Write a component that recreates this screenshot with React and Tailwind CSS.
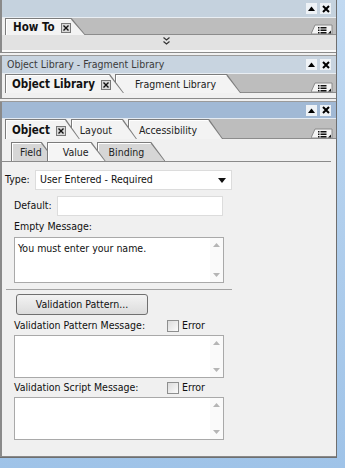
import React from "react";

const font = { fontFamily: '"DejaVu Sans Condensed", "Liberation Sans", Arial, sans-serif' };

const CLIP = "[clip-path:polygon(0_0,calc(100%-14px)_0,100%_100%,0_100%)]";

function TitleButtons() {
  return (
    <div className="ml-auto flex items-center gap-[3px] pr-[5px]">
      <div className="w-[11px] h-[11px] bg-[#eef2f6] flex items-center justify-center">
        <svg width="7" height="5" viewBox="0 0 7 5">
          <path d="M0 5 L3.5 0.5 L7 5 Z" fill="#000" />
        </svg>
      </div>
      <div className="w-[11px] h-[11px] bg-[#eef2f6] flex items-center justify-center">
        <svg width="8" height="8" viewBox="0 0 8 8">
          <path d="M1 1 L7 7 M7 1 L1 7" stroke="#000" strokeWidth="2" />
        </svg>
      </div>
    </div>
  );
}

function CloseBox() {
  return (
    <span className="inline-flex w-[10px] h-[10px] border border-[#777] bg-[#d8d8d8] items-center justify-center ml-[6px]">
      <svg width="6" height="6" viewBox="0 0 6 6">
        <path d="M0.5 0.5 L5.5 5.5 M5.5 0.5 L0.5 5.5" stroke="#111" strokeWidth="1.4" />
      </svg>
    </span>
  );
}

function Tab({ label, bold, close, first, z, bg = "bg-[#f3f3f3]", pl = "pl-[5px]", pr = "pr-[16px]" }) {
  return (
    <div className={`relative h-full ${first ? "" : "-ml-[9px]"} ${z} bg-[#7c7c7c] pt-px pl-px pr-px ${CLIP}`}>
      <div className={`h-full ${bg} flex items-center pt-[1px] ${pl} ${pr} ${CLIP} border-l border-t border-white`}>
        <span className={bold ? "font-bold text-[11.5px] text-[#111]" : "text-[10.5px] text-[#222]"}>{label}</span>
        {close && <CloseBox />}
      </div>
    </div>
  );
}

function MenuIcon() {
  return (
    <svg width="22" height="10" viewBox="0 0 22 10" className="self-end">
      <path d="M0 10 L4 1 L21 1 L21 10 Z" fill="#f4f4f4" stroke="#8a8a8a" strokeWidth="1" />
      <rect x="7" y="3" width="1.5" height="1.5" fill="#111" />
      <rect x="7" y="5.5" width="1.5" height="1.5" fill="#111" />
      <rect x="7" y="8" width="1.5" height="1.5" fill="#111" />
      <rect x="9.5" y="3" width="6" height="1.5" fill="#111" />
      <rect x="9.5" y="5.5" width="6" height="1.5" fill="#111" />
      <rect x="9.5" y="8" width="6" height="1.5" fill="#111" />
      <path d="M20 6.5 L20 9.5 L17 9.5 Z" fill="#111" />
    </svg>
  );
}

function TabRow({ children, h = "h-[17px]" }) {
  return (
    <div className={`flex ${h} pl-[3px] bg-[#f0f0f0]`}>
      {children}
      <div className="-ml-[14px] flex-1 flex justify-end bg-[#bdbdbd] border-b border-[#8c8c8c] pr-[3px]">
        <MenuIcon />
      </div>
    </div>
  );
}

function Scroll() {
  return (
    <div className="w-[13px] flex flex-col justify-between items-center py-[5px] bg-[#fafafa]">
      <svg width="7" height="4" viewBox="0 0 7 4"><path d="M0 4 L3.5 0 L7 4 Z" fill="#b5b5b5" /></svg>
      <svg width="7" height="4" viewBox="0 0 7 4"><path d="M0 0 L3.5 4 L7 0 Z" fill="#b5b5b5" /></svg>
    </div>
  );
}

function TextArea({ text, h }) {
  return (
    <div className={`ml-[12px] w-[210px] ${h} flex bg-white border border-[#a9a9a9]`}>
      <div className="flex-1 pl-[3px] pt-[3px] text-[10.5px] text-[#111]">{text}</div>
      <Scroll />
    </div>
  );
}

function Check() {
  return (
    <span className="inline-block w-[12px] h-[12px] border border-[#8e8f8f] bg-gradient-to-br from-[#dcdcdc] to-[#fbfbfb] mr-[3px]" />
  );
}

export default function App() {
  return (
    <div className="w-[345px] h-[468px] bg-gradient-to-b from-[#c1d9f1] to-[#9fc3e8] overflow-hidden" style={font}>
      <div className="w-[337px] h-[458px] bg-[#f0f0f0] border-r border-b border-[#6f6f6f] flex flex-col">
        {/* How To */}
        <div className="border-l-2 border-[#8a8a8a]">
          <div className="h-[18px] bg-[#c5d2de] flex items-center border-b border-[#e9eef3]">
            <TitleButtons />
          </div>
          <TabRow>
            <Tab label="How To" bold close first z="z-30" pl="pl-[6px]" pr="pr-[14px]" />
          </TabRow>
          <div className="h-[15px] bg-[#e2e2e2] flex items-start justify-center pt-[2px]">
            <svg width="7" height="8" viewBox="0 0 7 8" className="-ml-[6px]">
              <path d="M0.5 0.5 L3.5 3 L6.5 0.5 M0.5 4.5 L3.5 7 L6.5 4.5" stroke="#333" strokeWidth="1.2" fill="none" />
            </svg>
          </div>
          <div className="h-[3px] bg-[#fafafa] border-b border-[#8a8a8a]" />
        </div>

        <div className="h-[3px] border-b border-[#9a9a9a]" />

        {/* Object Library - Fragment Library */}
        <div className="border-l-2 border-[#8a8a8a]">
          <div className="h-[18px] bg-[#c8d4e0] flex items-center border-b border-[#e9eef3]">
            <span className="pl-[5px] text-[10.5px] text-[#3b3b3b]">Object Library - Fragment Library</span>
            <TitleButtons />
          </div>
          <TabRow h="h-[19px]">
            <Tab label="Object Library" bold close first z="z-30" pr="pr-[12px]" />
            <Tab label="Fragment Library" z="z-20" pl="pl-[18px]" pr="pr-[24px]" />
          </TabRow>
          <div className="h-[6px] bg-[#f0f0f0] border-b border-[#8a8a8a]" />
        </div>

        <div className="h-[3px] border-b border-[#9a9a9a]" />

        {/* Object panel */}
        <div className="flex-1 flex flex-col border-l-2 border-[#8a8a8a] border-b border-b-[#8a8a8a]">
          <div className="h-[17px] bg-[#a1b9d5] flex items-center border-b border-[#e4ebf2]">
            <TitleButtons />
          </div>
          <TabRow h="h-[20px]">
            <Tab label="Object" bold close first z="z-30" pr="pr-[13px]" />
            <Tab label="Layout" z="z-20" pl="pl-[7px]" pr="pr-[24px]" />
            <Tab label="Accessibility" z="z-10" pl="pl-[9px]" pr="pr-[25px]" />
          </TabRow>

          <div className="flex h-[20px] mt-[3px] pl-[9px] mr-[5px] border-b border-[#8a8a8a]">
            <Tab label="Field" first z="z-30" bg="bg-[#d6d6d6]" pl="pl-[7px]" pr="pr-[13px]" />
            <Tab label="Value" z="z-40" bg="bg-[#f5f5f5]" pl="pl-[14px]" pr="pr-[16px]" />
            <Tab label="Binding" z="z-10" bg="bg-[#d6d6d6]" pl="pl-[10px]" pr="pr-[20px]" />
          </div>

          <div className="flex flex-col text-[10.5px] text-[#111]">
            <div className="flex items-center mt-[8px] h-[20px]">
              <span className="pl-[3px] w-[33px]">Type:</span>
              <div className="w-[197px] h-[20px] bg-white border border-[#dcdcdc] flex items-center pl-[4px] pr-[5px]">
                <span className="flex-1">User Entered - Required</span>
                <svg width="8" height="5" viewBox="0 0 8 5"><path d="M0 0 L4 5 L8 0 Z" fill="#111" /></svg>
              </div>
            </div>
            <div className="flex items-center mt-[6px] h-[20px]">
              <span className="pl-[12px] w-[55px]">Default:</span>
              <div className="w-[166px] h-[20px] bg-white border border-[#dcdcdc]" />
            </div>
            <div className="pl-[12px] mt-[3px] h-[16px] flex items-center">Empty Message:</div>
            <div className="mt-[2px]">
              <TextArea text="You must enter your name." h="h-[46px]" />
            </div>
            <div className="mt-[6px] ml-[4px] w-[226px] h-px bg-[#a3a3a3]" />
            <div className="mt-[4px] ml-[14px] w-[132px] h-[21px] rounded-[3px] border border-[#707070] bg-gradient-to-b from-[#f3f3f3] to-[#dcdcdc] flex items-center justify-center">
              Validation Pattern...
            </div>
            <div className="flex items-center mt-[3px] h-[16px]">
              <span className="pl-[12px] w-[165px]">Validation Pattern Message:</span>
              <Check />
              <span>Error</span>
            </div>
            <div className="mt-[1px]">
              <TextArea h="h-[43px]" />
            </div>
            <div className="flex items-center mt-[2px] h-[16px]">
              <span className="pl-[12px] w-[165px]">Validation Script Message:</span>
              <Check />
              <span>Error</span>
            </div>
            <div className="mt-[1px]">
              <TextArea h="h-[43px]" />
            </div>
          </div>
        </div>
      </div>
    </div>
  );
}
